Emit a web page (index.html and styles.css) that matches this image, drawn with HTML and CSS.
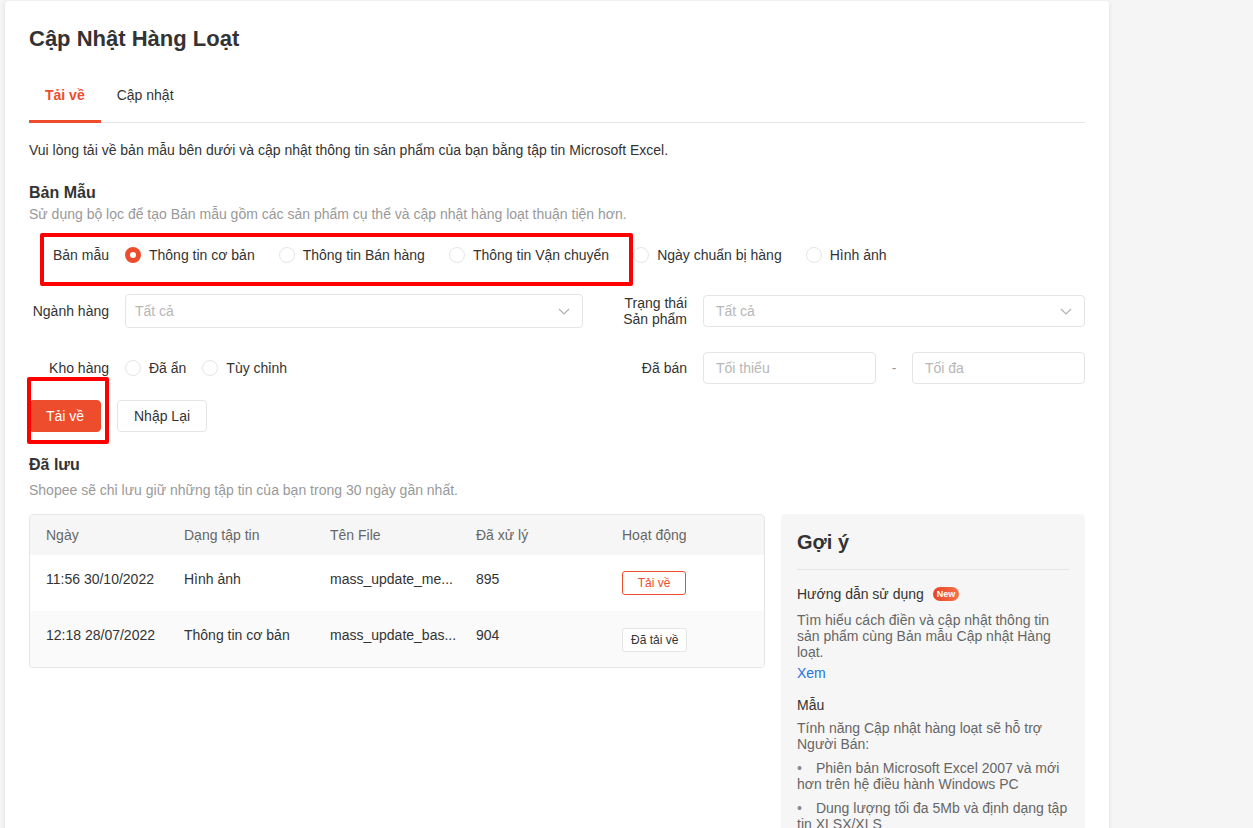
FILE: index.html
```html
<!DOCTYPE html>
<html lang="vi">
<head>
<meta charset="utf-8">
<title>Cập Nhật Hàng Loạt</title>
<link rel="stylesheet" href="styles.css">
</head>
<body>
<div class="page">
  <div class="card">
    <h1 class="title">Cập Nhật Hàng Loạt</h1>
    <div class="tabs">
      <div class="tab active">Tải về</div>
      <div class="tab">Cập nhật</div>
    </div>
    <p class="intro">Vui lòng tải về bản mẫu bên dưới và cập nhật thông tin sản phẩm của bạn bằng tập tin Microsoft Excel.</p>

    <h2 class="sec-title">Bản Mẫu</h2>
    <p class="sec-sub">Sử dụng bộ lọc để tạo Bản mẫu gồm các sản phẩm cụ thể và cập nhật hàng loạt thuận tiện hơn.</p>

    <div class="field row-template">
      <span class="label">Bản mẫu</span>
      <div class="radios">
        <label class="radio checked"><span class="dot"></span>Thông tin cơ bản</label>
        <label class="radio"><span class="dot"></span>Thông tin Bán hàng</label>
        <label class="radio"><span class="dot"></span>Thông tin Vận chuyển</label>
        <label class="radio"><span class="dot"></span>Ngày chuẩn bị hàng</label>
        <label class="radio"><span class="dot"></span>Hình ảnh</label>
      </div>
      <div class="mark mark-1"></div>
    </div>

    <div class="filters">
      <div class="field">
        <span class="label">Ngành hàng</span>
        <div class="select tall"><span class="ph">Tất cả</span>
          <svg class="chev" width="12" height="7" viewBox="0 0 12 7"><path d="M1 1l5 5 5-5" fill="none" stroke="#b0b0b0" stroke-width="1.2"/></svg>
        </div>
      </div>
      <div class="field">
        <span class="label two">Trạng thái<br>Sản phẩm</span>
        <div class="select"><span class="ph">Tất cả</span>
          <svg class="chev" width="12" height="7" viewBox="0 0 12 7"><path d="M1 1l5 5 5-5" fill="none" stroke="#b0b0b0" stroke-width="1.2"/></svg>
        </div>
      </div>
      <div class="field">
        <span class="label">Kho hàng</span>
        <div class="radios small">
          <label class="radio"><span class="dot"></span>Đã ẩn</label>
          <label class="radio"><span class="dot"></span>Tùy chỉnh</label>
        </div>
      </div>
      <div class="field">
        <span class="label">Đã bán</span>
        <div class="range">
          <div class="input"><span class="ph">Tối thiểu</span></div>
          <span class="dash">-</span>
          <div class="input"><span class="ph">Tối đa</span></div>
        </div>
      </div>
    </div>

    <div class="actions">
      <button class="btn primary">Tải về</button>
      <button class="btn">Nhập Lại</button>
      <div class="mark mark-2"></div>
    </div>

    <h2 class="sec-title saved">Đã lưu</h2>
    <p class="sec-sub saved-sub">Shopee sẽ chỉ lưu giữ những tập tin của bạn trong 30 ngày gần nhất.</p>

    <div class="bottom">
      <div class="table">
        <div class="tr head">
          <div class="td">Ngày</div>
          <div class="td">Dạng tập tin</div>
          <div class="td">Tên File</div>
          <div class="td">Đã xử lý</div>
          <div class="td">Hoạt động</div>
        </div>
        <div class="tr">
          <div class="td">11:56 30/10/2022</div>
          <div class="td">Hình ảnh</div>
          <div class="td">mass_update_me...</div>
          <div class="td">895</div>
          <div class="td"><button class="mini red">Tải về</button></div>
        </div>
        <div class="tr alt">
          <div class="td">12:18 28/07/2022</div>
          <div class="td">Thông tin cơ bản</div>
          <div class="td">mass_update_bas...</div>
          <div class="td">904</div>
          <div class="td"><button class="mini">Đã tải về</button></div>
        </div>
      </div>

      <aside class="tips">
        <h3 class="tips-title">Gợi ý</h3>
        <div class="tips-item-title">Hướng dẫn sử dụng <span class="badge">New</span></div>
        <p class="tips-text">Tìm hiểu cách điền và cập nhật thông tin sản phẩm cùng Bản mẫu Cập nhật Hàng loạt.</p>
        <a class="link">Xem</a>
        <div class="tips-item-title second">Mẫu</div>
        <p class="tips-text first">Tính năng Cập nhật hàng loạt sẽ hỗ trợ Người Bán:</p>
        <p class="tips-text bullet">Phiên bản Microsoft Excel 2007 và mới hơn trên hệ điều hành Windows PC</p>
        <p class="tips-text bullet">Dung lượng tối đa 5Mb và định dạng tập tin XLSX/XLS</p>
      </aside>
    </div>
  </div>
</div>
</body>
</html>
```

FILE: styles.css
```css
* { box-sizing: border-box; }
html, body { margin: 0; padding: 0; }
body {
  background: #f5f5f5;
  font-family: "Liberation Sans", Arial, sans-serif;
  font-size: 14px;
  color: #333;
  overflow: hidden;
  height: 828px;
}
.page { padding: 1px 0 0 5px; }
.card {
  width: 1104px;
  min-height: 900px;
  background: #fff;
  border-radius: 3px;
  box-shadow: 0 1px 4px rgba(0,0,0,0.10);
  padding: 21px 24px 24px;
}
.title {
  margin: 0;
  font-size: 22px;
  line-height: 34px;
  font-weight: bold;
  color: #333;
}
.tabs {
  display: flex;
  margin-top: 11px;
  border-bottom: 1px solid #e5e5e5;
}
.tab {
  position: relative;
  padding: 0 16px;
  height: 55px;
  line-height: 56px;
  font-size: 14px;
  color: #333;
}
.tab.active { color: #ee4d2d; font-weight: bold; }
.tab.active::after {
  content: "";
  position: absolute;
  left: 0; right: 0; bottom: -1px;
  height: 3px;
  background: #ee4d2d;
}
.intro { margin: 17px 0 0; line-height: 20px; }
.sec-title {
  margin: 22px 0 0;
  font-size: 16px;
  line-height: 22px;
  font-weight: bold;
}
.sec-sub { margin: 0; color: #999; line-height: 20px; }

.field { display: flex; align-items: center; gap: 16px; }
.label {
  width: 80px;
  flex: none;
  text-align: right;
  line-height: 16px;
}
.row-template { position: relative; margin-top: 15px; height: 32px; }
.radios { display: flex; align-items: center; gap: 24px; }
.radio { display: flex; align-items: center; gap: 8px; line-height: 20px; }
.dot {
  width: 16px; height: 16px;
  border-radius: 50%;
  border: 1px solid #e5e5e5;
  background: #fff;
}
.radio.checked .dot { border: 5px solid #ee4d2d; }

.filters {
  display: grid;
  grid-template-columns: 554px 478px;
  column-gap: 24px;
  row-gap: 24px;
  margin-top: 23px;
}
.select, .input {
  position: relative;
  flex: 1;
  height: 32px;
  border: 1px solid #e5e5e5;
  border-radius: 4px;
  display: flex;
  align-items: center;
  padding: 0 12px;
}
.select.tall { height: 34px; padding-left: 9px; }
.ph { color: #b7b7b7; }
.chev { position: absolute; right: 12px; top: 50%; margin-top: -3px; }
.range { flex: 1; display: flex; align-items: center; }
.range .input { flex: none; width: 173px; }
.dash { width: 36px; text-align: center; color: #999; }
.radios.small { gap: 16px; }

.actions {
  position: relative;
  display: flex;
  gap: 16px;
  margin-top: 16px;
}
.btn {
  height: 32px;
  padding: 0 16px;
  border: 1px solid #e5e5e5;
  background: #fff;
  border-radius: 4px;
  font-family: inherit;
  font-size: 14px;
  color: #333;
  white-space: nowrap;
}
.btn.primary {
  width: 72px;
  padding: 0;
  background: #ee4d2d;
  border-color: #ee4d2d;
  color: #fff;
}
.mark {
  position: absolute;
  border: 4px solid #ff0000;
  border-radius: 2px;
  pointer-events: none;
}
.mark-1 { left: 11px; top: -6px; width: 593px; height: 53px; }
.mark-2 { left: -2px; top: -23px; width: 82px; height: 67px; }

.sec-title.saved { margin-top: 22px; }
.saved-sub { margin-top: 4px; }
.bottom {
  display: flex;
  align-items: flex-start;
  gap: 16px;
  margin-top: 14px;
}
.table {
  width: 736px;
  border: 1px solid #e5e5e5;
  border-radius: 4px;
  overflow: hidden;
}
.tr {
  display: grid;
  grid-template-columns: 138px 146px 146px 146px 1fr;
  background: #fff;
}
.tr.head { background: #f6f6f6; height: 40px; align-items: center; }
.tr.head .td { color: #666; padding-top: 0; padding-bottom: 0; }
.tr.alt { background: #fafafa; }
.td {
  padding: 16px 0 16px 16px;
  line-height: 16px;
  white-space: nowrap;
  min-width: 0;
}
.tr:not(.head) { height: 56px; }
.mini {
  height: 24px;
  padding: 0 8px;
  border: 1px solid #e5e5e5;
  border-radius: 3px;
  background: #fff;
  font-family: inherit;
  font-size: 12px;
  color: #333;
}
.mini.red { width: 64px; border-color: #ee4d2d; color: #ee4d2d; }
.tr.alt .mini { margin-top: 1px; }

.tips {
  width: 304px;
  min-height: 330px;
  background: #f6f6f6;
  border-radius: 4px;
  padding: 16px 16px;
}
.tips-title {
  margin: 0;
  font-size: 20px;
  line-height: 24px;
  font-weight: bold;
  padding-bottom: 15px;
  border-bottom: 1px solid #e5e5e5;
}
.tips-item-title {
  margin-top: 14px;
  line-height: 20px;
  display: flex;
  align-items: center;
  gap: 9px;
}
.tips-item-title.second { margin-top: 12px; }
.badge {
  display: inline-block;
  height: 14px;
  padding: 0 4px;
  border-radius: 7px;
  background: linear-gradient(90deg, #e8432a, #f5744a);
  color: #fff;
  font-size: 9px;
  font-weight: bold;
  line-height: 14px;
}
.tips-text {
  margin: 8px 0 0;
  line-height: 16px;
  color: #666;
}
.tips-text.first { margin-top: 5px; }
.tips-text.bullet::before { content: "•"; margin-right: 14px; color: #888; }
.link { display: block; margin-top: 3px; line-height: 20px; color: #2673dd; }
```
